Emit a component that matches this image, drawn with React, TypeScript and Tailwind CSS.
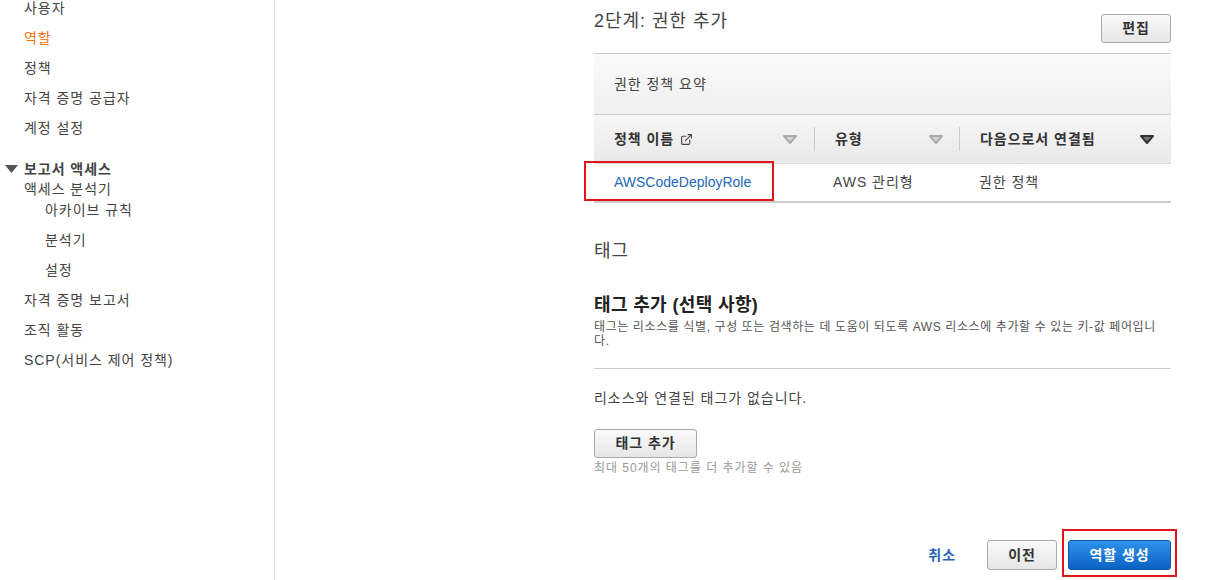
import { ExternalLink } from "lucide-react";

const FONT = { fontFamily: '"Liberation Sans", "Noto Sans CJK KR", sans-serif' };

function SortIcon({ dark }: { dark?: boolean }) {
  return (
    <svg width="14" height="9" viewBox="0 0 14 9">
      <polygon
        points="1,1 13,1 7,8"
        fill={dark ? "#777" : "#d5d5d5"}
        stroke={dark ? "#333" : "#aaa"}
        strokeWidth="2"
        strokeLinejoin="round"
      />
    </svg>
  );
}

function NavItem({ label, active, indent }: { label: string; active?: boolean; indent?: boolean }) {
  return (
    <div
      className={`flex h-[30px] items-center text-[14px] ${indent ? "pl-[45px]" : "pl-[24px]"} ${
        active ? "text-[#ec7211]" : "text-[#444]"
      }`}
    >
      {label}
    </div>
  );
}

function Sidebar() {
  return (
    <aside className="w-[275px] shrink-0 border-r border-[#d5dbdb] h-[580px] overflow-hidden">
      <div className="-mt-[7px]">
        <NavItem label="사용자" />
        <NavItem label="역할" active />
        <NavItem label="정책" />
        <NavItem label="자격 증명 공급자" />
        <NavItem label="계정 설정" />
        <div className="mt-[16px] flex h-[20px] items-center gap-[6px] pl-[5px] text-[14px] font-bold text-[#444]">
          <svg width="13" height="8" viewBox="0 0 13 8">
            <polygon points="0,0 13,0 6.5,8" fill="#545454" />
          </svg>
          보고서 액세스
        </div>
        <div className="relative top-[2px] flex h-[16px] items-center pl-[24px] text-[14px] text-[#444]">
          액세스 분석기
        </div>
        <NavItem label="아카이브 규칙" indent />
        <NavItem label="분석기" indent />
        <NavItem label="설정" indent />
        <NavItem label="자격 증명 보고서" />
        <NavItem label="조직 활동" />
        <NavItem label="SCP(서비스 제어 정책)" />
      </div>
    </aside>
  );
}

function GrayButton({ children, className = "" }: { children: React.ReactNode; className?: string }) {
  return (
    <button
      className={`flex items-center justify-center rounded-[3px] border border-[#a9a9a9] bg-gradient-to-b from-[#fafafa] to-[#e6e6e6] text-[14px] font-bold text-[#333] ${className}`}
    >
      {children}
    </button>
  );
}

export default function App() {
  return (
    <div className="relative flex h-[580px] w-[1206px] overflow-hidden bg-white tracking-[0.06em]" style={FONT}>
      <Sidebar />
      <main className="ml-[319px] w-[577px]">
        <div className="flex h-[53px] items-start justify-between">
          <h2 className="mt-[7px] text-[18px] leading-[28px] text-[#444]">2단계: 권한 추가</h2>
          <GrayButton className="mt-[14px] h-[29px] w-[70px]">편집</GrayButton>
        </div>

        <div className="border-t border-[#ccc]">
          <div className="flex h-[60px] items-center bg-gradient-to-b from-[#fafafa] to-[#efefef] pl-[20px] text-[14px] text-[#444]">
            권한 정책 요약
          </div>
          <div className="flex h-[49px] items-center border-t border-[#ccc] bg-gradient-to-b from-[#f6f6f6] to-[#e9e9e9] text-[14px] font-bold text-[#333]">
            <div className="flex w-[220px] items-center justify-between pl-[20px] pr-[17px]">
              <span className="flex items-center gap-[6px]">
                정책 이름 <ExternalLink size={13} strokeWidth={2} className="text-[#444]" />
              </span>
              <SortIcon />
            </div>
            <div className="h-[24px] w-px bg-[#ccc]" />
            <div className="flex w-[144px] items-center justify-between pl-[20px] pr-[16px]">
              <span>유형</span>
              <SortIcon />
            </div>
            <div className="h-[24px] w-px bg-[#ccc]" />
            <div className="flex flex-1 items-center justify-between pl-[20px] pr-[17px]">
              <span>다음으로서 연결됨</span>
              <SortIcon dark />
            </div>
          </div>
          <div className="flex h-[40px] items-center border-b-2 border-t border-b-[#ccc] border-t-[#ddd] text-[14px] text-[#444]">
            <div className="w-[220px] pl-[20px] tracking-normal text-[#2568b8]">AWSCodeDeployRole</div>
            <div className="w-[145px] pl-[19px]">AWS 관리형</div>
            <div className="pl-[20px]">권한 정책</div>
          </div>
        </div>

        <h3 className="mt-[34px] text-[18px] leading-[28px] text-[#444]">태그</h3>
        <h4 className="mt-[27px] text-[18px] font-bold leading-[26px] tracking-[0.02em] text-[#222]">
          태그 추가 (선택 사항)
        </h4>
        <p className="mt-[2px] text-[12px] leading-[14px] tracking-[0.05em] text-[#555]">
          태그는 리소스를 식별, 구성 또는 검색하는 데 도움이 되도록 AWS 리소스에 추가할 수 있는 키-값 페어입니다.
        </p>
        <div className="mt-[20px] border-t border-[#ccc]" />
        <p className="mt-[19px] text-[14px] leading-[20px] text-[#444]">리소스와 연결된 태그가 없습니다.</p>
        <GrayButton className="mt-[21px] h-[29px] w-[103px]">태그 추가</GrayButton>
        <p className="mt-[2px] text-[12px] leading-[16px] text-[#999]">최대 50개의 태그를 더 추가할 수 있음</p>

        <div className="mt-[64px] flex items-center justify-end">
          <span className="mr-[31px] text-[14px] font-bold text-[#2a64b5]">취소</span>
          <GrayButton className="h-[30px] w-[70px]">이전</GrayButton>
          <button className="ml-[11px] flex h-[30px] w-[103px] items-center justify-center rounded-[3px] border border-[#0b57a4] bg-gradient-to-b from-[#2e92ec] to-[#0a62c4] text-[14px] font-bold text-white">
            역할 생성
          </button>
        </div>
      </main>

      <div className="absolute left-[584px] top-[161px] h-[40px] w-[190px] border-2 border-[#e3131c]" />
      <div className="absolute left-[1062px] top-[529px] h-[48px] w-[115px] border-2 border-[#e3131c]" />
    </div>
  );
}
